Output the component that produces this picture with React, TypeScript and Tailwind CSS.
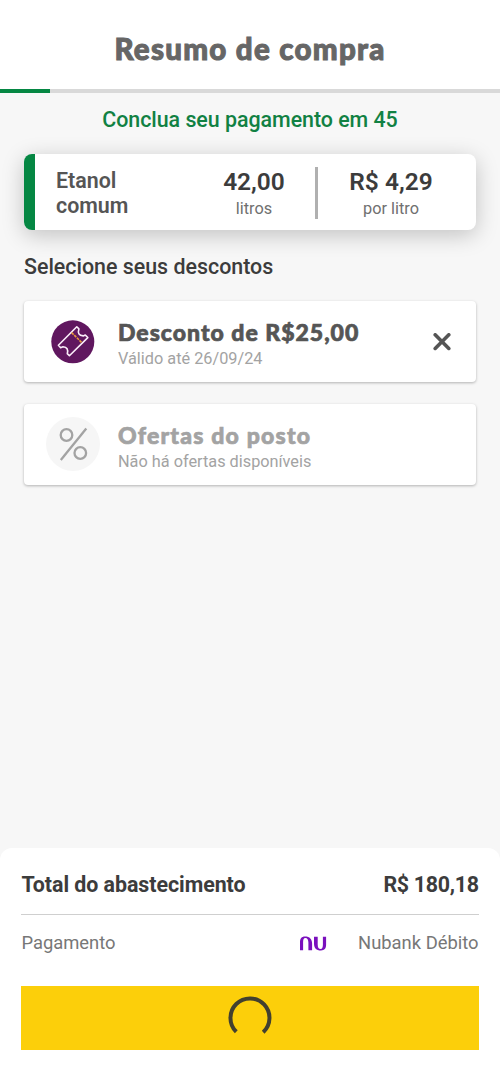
interface OfferCardProps {
	icon: React.ReactNode;
	title: string;
	subtitle: string;
	disabled?: boolean;
	onRemove?: () => void;
}

function TicketIcon() {
	return (
		<svg viewBox="0 0 44 44" className="size-11" fill="none">
			<circle cx="21.8" cy="21.8" r="21.5" fill="#60175f" />
			<path
				d="M7.4 25.3L25.8 6.8L27.9 8.9Q25.8 15.3 32.2 15.9L34.3 15L36.8 17.6L18.4 35.7L16.3 33.6Q18 27.2 12 26.8L9.6 27.7Z"
				stroke="#fbeefa"
				strokeWidth="1.6"
				strokeLinejoin="round"
			/>
			<path d="M20.6 12.6L31 22.8" stroke="#e79b3c" strokeWidth="1.6" strokeDasharray="2.8 0.9" />
		</svg>
	);
}

function PercentIcon() {
	return (
		<svg viewBox="0 0 54 54" className="size-[54px]" fill="none" stroke="#a3a3a3" strokeWidth="2.3">
			<circle cx="27" cy="27" r="27" fill="#f6f6f6" stroke="none" />
			<circle cx="20.5" cy="18" r="5.8" />
			<circle cx="34.3" cy="36" r="5.8" />
			<path d="M40.3 11.5L14.8 43" />
		</svg>
	);
}

function CloseIcon() {
	return (
		<svg viewBox="0 0 18 18" className="size-[18px]" fill="none" stroke="#555555" strokeWidth="3.6" strokeLinecap="round">
			<path d="M2.2 1.8L15.8 15.4M15.8 1.8L2.2 15.4" />
		</svg>
	);
}

function NuLogo() {
	return (
		<svg viewBox="0 0 28 15" className="h-[15px] w-7" fill="#7a10bd">
			<path d="M1 14.3V6.2C1 2.6 2.6 0.5 6 0.5C10.8 0.5 13.1 3.2 13.1 7.6V14.3H9.4V6.8C9.4 3.5 8.3 2 6.4 2C4.5 2 4.1 4 4.1 6.5V14.3Z" />
			<path d="M15 0.7H18.7V8.2C18.7 11.5 19.7 13 21.6 13C23.3 13 23.9 11 23.9 8.5V0.7H27.1V8.8C27.1 12.4 25.4 14.5 22 14.5C17.2 14.5 15 11.8 15 7.4Z" />
		</svg>
	);
}

function Spinner() {
	return (
		<svg viewBox="0 0 44 44" className="size-11" fill="none">
			<path d="M8.3 35.8A19.5 19.5 0 1 1 35.2 36.2" stroke="#42402f" strokeWidth="4" />
		</svg>
	);
}

function OfferCard({ icon, title, subtitle, disabled, onRemove }: OfferCardProps) {
	return (
		<div className="flex h-[81px] items-center rounded-[4px] bg-white pr-[25.5px] pl-[22px] shadow-[0_1px_3px_rgba(0,0,0,0.28)]">
			<div className="flex w-[54px] shrink-0 justify-center">{icon}</div>
			<div className="ml-[18px] flex-1 pt-1.5 whitespace-nowrap">
				<p
					className={`font-['Lato'] text-[23px] leading-7 font-black [-webkit-text-stroke:0.7px_currentColor] ${disabled ? "tracking-[1.2px] text-[#a3a3a3]" : "tracking-[1px] text-[#555555]"}`}
				>
					{title}
				</p>
				<p className="text-[16.3px] leading-[25px] text-[#a3a3a3]">{subtitle}</p>
			</div>
			{onRemove && (
				<button onClick={onRemove} aria-label="Remover desconto">
					<CloseIcon />
				</button>
			)}
		</div>
	);
}

export default function App() {
	return (
		<div className="flex h-[1071px] w-[500px] flex-col overflow-hidden bg-[#f7f7f7] font-['Roboto',sans-serif] text-[#3c3c3c]">
			{/* Header */}
			<header className="flex h-[89px] shrink-0 items-center justify-center bg-white pt-[9px]">
				<h1 className="font-['Lato'] text-[29.5px] leading-9 font-black tracking-[1.25px] whitespace-nowrap text-[#666666] [-webkit-text-stroke:1px_currentColor]">
					Resumo de compra
				</h1>
			</header>
			<div className="h-1 shrink-0 bg-[#d9d9d9]">
				<div className="h-full w-[50px] bg-[#058743]" />
			</div>

			<main className="flex flex-1 flex-col px-6">
				<p className="mt-[13px] text-center text-[21.4px] leading-7 font-medium tracking-[-0.03px] whitespace-nowrap text-[#118143]">
					Conclua seu pagamento em 45
				</p>

				{/* Fuel summary */}
				<section className="mt-5 flex h-[76px] items-center rounded-lg bg-white shadow-[0_5px_22px_rgba(0,0,0,0.22)]">
					<div className="h-full w-[11px] rounded-l-lg bg-[#058743]" />
					<p className="ml-[21px] w-[136px] pt-0.5 text-[21.4px] leading-[25px] font-semibold text-[#555555]">
						Etanol
						<br />
						comum
					</p>
					<div className="w-[124px] pt-[5px] text-center">
						<p className="text-[24.5px] leading-7 font-semibold">42,00</p>
						<p className="text-[16.3px] leading-[25px] text-[#707070]">litros</p>
					</div>
					<div className="mt-0.5 -ml-px h-[52px] w-[3px] bg-[#b0b0b0]" />
					<div className="w-[146px] pt-[5px] text-center">
						<p className="text-[24.5px] leading-7 font-semibold">R$ 4,29</p>
						<p className="text-[16.3px] leading-[25px] text-[#707070]">por litro</p>
					</div>
				</section>

				<h2 className="mt-[23px] text-[21.4px] leading-7 font-medium whitespace-nowrap">Selecione seus descontos</h2>

				<div className="mt-5 space-y-[21.5px]">
					<OfferCard icon={<TicketIcon />} title="Desconto de R$25,00" subtitle="Válido até 26/09/24" onRemove={() => {}} />
					<OfferCard icon={<PercentIcon />} title="Ofertas do posto" subtitle="Não há ofertas disponíveis" disabled />
				</div>
			</main>

			{/* Payment */}
			<footer className="h-[223px] shrink-0 rounded-t-xl bg-white px-[21.4px] pt-[23px]">
				<div className="flex h-11 justify-between border-b border-[#cfcfcf] text-[21.4px] leading-7 font-bold">
					<span className="tracking-[-0.05px]">Total do abastecimento</span>
					<span className="tracking-[-0.3px]">R$ 180,18</span>
				</div>
				<div className="mt-4 flex h-6 items-center text-[18.4px] leading-6 text-[#777777]">
					<span className="flex-1">Pagamento</span>
					<NuLogo />
					<span className="ml-[31px]">Nubank Débito</span>
				</div>
				<button className="mt-[31px] flex h-[63.5px] w-full items-center justify-center bg-[#fccf0a]">
					<Spinner />
				</button>
			</footer>
		</div>
	);
}
